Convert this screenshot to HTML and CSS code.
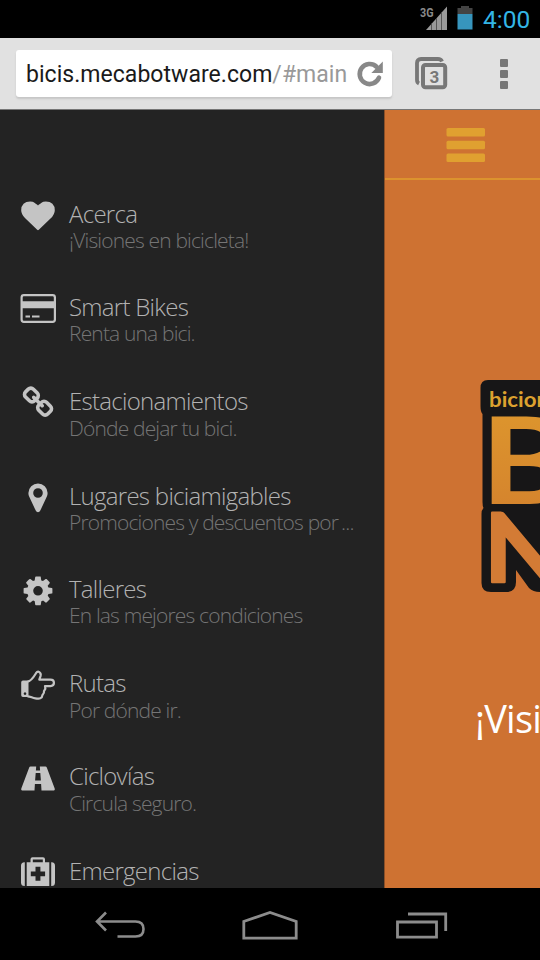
FILE: index.html
```
<!DOCTYPE html>
<html lang="es">
<head>
<meta charset="utf-8">
<title>Bicis</title>
<link rel="stylesheet" href="styles.css">
</head>
<body>
<div class="phone">
  <div class="status">
    <svg class="signal" width="30" height="26" viewBox="0 0 30 26"><text class="net" x="1" y="12" textLength="13.500" lengthAdjust="spacingAndGlyphs">3G</text><path d="M7 25L28 1.500V25Z" fill="#999"/><path d="M12.500 18.500v6.500M17.500 13v12M22.500 7.500v17.500" stroke="#555" stroke-width="1"/></svg>
    <svg class="battery" width="16" height="24" viewBox="0 0 16 24"><path d="M0.500 2H4V0h8v2h3.500v6H.5Z" fill="#444"/><path d="M.5 8h15v15.500H.5Z" fill="#3795bd"/></svg>
    <span class="clock">4:00</span>
  </div>
  <div class="toolbar">
    <div class="address">
      <span class="url">bicis.mecabotware.com<span class="path">/#main</span></span>
      <svg class="reload" width="28" height="28" viewBox="0 0 28 28"><path d="M20.500 6.700A10 10 0 1 0 23 17.700" fill="none" stroke="#888" stroke-width="4.600" stroke-linecap="round"/><path d="M26.800 1.500V13H15.300Z" fill="#888"/></svg>
    </div>
    <svg class="tabs" width="34" height="34" viewBox="0 0 34 34"><path d="M27 4.500Q26 2 23 2H6Q2 2 2 6v17q0 2.500 2 3.500" fill="none" stroke="#777" stroke-width="3.800"/><rect x="8" y="8" width="22.200" height="22.200" rx="2.500" fill="#e1e1e1" stroke="#777" stroke-width="4"/><text class="count" x="19.300" y="25.500" text-anchor="middle">3</text></svg>
    <svg class="more" width="8" height="30" viewBox="0 0 8 30" fill="#777"><rect width="8" height="8" rx="1"/><rect y="11" width="8" height="8" rx="1"/><rect y="22" width="8" height="8" rx="1"/></svg>
  </div>
  <div class="view">
    <nav class="drawer">
      <div class="item"><svg class="icon" viewBox="-64 0 1920 1792"><path d="M896 1664q-26 0-44-18l-624-602q-10-8-27.500-26T145 952.500 77 855 23.500 734 0 596q0-220 127-344t351-124q62 0 126.500 21.500t120 58T820 276t76 68q36-36 76-68t95.500-68.500 120-58T1314 128q224 0 351 124t127 344q0 221-229 450l-623 600q-18 18-44 18z"/></svg><div class="label"><span class="title">Acerca</span><span class="sub">¡Visiones en bicicleta!</span></div></div>
      <div class="item"><svg class="icon" viewBox="0 0 36 33.600"><rect x="1.600" y="3.200" width="33.300" height="26.700" rx="2.300" fill="none" stroke="#c4c4c4" stroke-width="2.200"/><path d="M1 9.200h34v7H1zM5.500 23.500h4.500v2H5.500zM12 23.500h7.500v2H12z"/></svg><div class="label"><span class="title">Smart Bikes</span><span class="sub">Renta una bici.</span></div></div>
      <div class="item"><svg class="icon" viewBox="-128 0 1920 1792"><path d="M1456 1216q0-40-28-68l-208-208q-28-28-68-28-42 0-72 32 3 3 19 18.500t21.500 21.500 15 19 13 25.500 3.500 27.500q0 40-28 68t-68 28q-15 0-27.500-3.500t-25.500-13-19-15-21.500-21.500-18.500-19q-33 31-33 73 0 40 28 68l206 207q27 27 68 27 40 0 68-26l147-146q28-28 28-67zm-703-705q0-40-28-68l-206-207q-28-28-68-28-39 0-68 27l-147 146q-28 28-28 67 0 40 28 68l208 208q27 27 68 27 42 0 72-31-3-3-19-18.500t-21.500-21.500-15-19-13-25.500-3.500-27.500q0-40 28-68t68-28q15 0 27.500 3.500t25.500 13 19 15 21.500 21.500 18.500 19q33-31 33-73zm895 705q0 120-85 203l-147 146q-83 83-203 83-121 0-204-85l-206-207q-83-83-83-203 0-123 88-209l-88-88q-86 88-208 88-120 0-204-84l-208-208q-84-84-84-204t85-203l147-146q83-83 203-83 121 0 204 85l206 207q83 83 83 203 0 123-88 209l88 88q86-88 208-88 120 0 204 84l208 208q84 84 84 204z"/></svg><div class="label"><span class="title">Estacionamientos</span><span class="sub low">Dónde dejar tu bici.</span></div></div>
      <div class="item"><svg class="icon" viewBox="-448 0 1920 1792"><path d="M768 640q0-106-75-181t-181-75-181 75-75 181 75 181 181 75 181-75 75-181zm256 0q0 109-33 179l-364 774q-16 33-47.500 52t-67.500 19-67.500-19-46.500-52l-365-774q-33-70-33-179 0-212 150-362t362-150 362 150 150 362z"/></svg><div class="label"><span class="title">Lugares biciamigables</span><span class="sub">Promociones y descuentos por<span class="dots">...</span></span></div></div>
      <div class="item"><svg class="icon" viewBox="-192 0 1920 1792"><path d="M1024 896q0-106-75-181t-181-75-181 75-75 181 75 181 181 75 181-75 75-181zm512-109v222q0 12-8 23t-20 13l-185 28q-19 54-39 91 35 50 107 138 10 12 10 25t-9 23q-27 37-99 108t-94 71q-12 0-26-9l-138-108q-44 23-91 38-16 136-29 186-7 28-36 28h-222q-14 0-24.500-8.500t-11.500-21.500l-28-184q-49-16-90-37l-141 107q-10 9-25 9-14 0-25-11-126-114-165-168-7-10-7-23 0-12 8-23 15-21 51-66.500t54-70.500q-27-50-41-99l-183-27q-13-2-21-12.500t-8-23.500v-222q0-12 8-23t19-13l186-28q14-46 39-92-40-57-107-138-10-12-10-24 0-10 9-23 26-36 98.500-107.500t94.500-71.500q13 0 26 10l138 107q44-23 91-38 16-136 29-186 7-28 36-28h222q14 0 24.500 8.500t11.500 21.500l28 184q49 16 90 37l142-107q9-9 24-9 13 0 25 10 129 119 165 170 7 8 7 22 0 12-8 23-15 21-51 66.500t-54 70.500q26 50 41 98l183 28q13 2 21 12.500t8 23.500z"/></svg><div class="label"><span class="title">Talleres</span><span class="sub">En las mejores condiciones</span></div></div>
      <div class="item"><svg class="icon" viewBox="0 0 36 33.600"><g transform="translate(0 1)"><path fill-rule="evenodd" d="M3 11.500h5.500V28H3q-1.800 0-1.800-1.800V13.300Q1.200 11.500 3 11.500ZM5 23.300a1.300 1.300 0 1 0 .01 0Z"/><path d="M7.500 12.600C11 12.300 14 7.500 16 4.200c2-3 5.400-.8 4.600 2.600L19.300 10.600H30.500c4.600 0 4.600 6.500 0 6.500H25c1.200 3-.6 4-1 5 .4 2.500-1.200 3.500-1.600 4-.2 3.600-3 3.800-7 3.200-3.500-.6-5-2-8-2" fill="none" stroke="#c4c4c4" stroke-width="2.200" stroke-linejoin="round"/></g></svg><div class="label"><span class="title">Rutas</span><span class="sub low">Por dónde ir.</span></div></div>
      <div class="item"><svg class="icon road" viewBox="0 0 36 33.600"><path fill-rule="evenodd" d="M10.500 4.600H25.500Q26.400 4.600 26.800 5.500L34.700 26.500Q35.300 28.600 33.800 28.600H2.200Q.7 28.600 1.300 26.500L9.200 5.500Q9.600 4.600 10.500 4.600ZM16.200 4.600L15.900 8.500H20.100L19.800 4.600ZM15.700 11L15.100 18.500H20.900L20.300 11ZM14.900 22L14.500 28.600H21.500L21.100 22Z"/></svg><div class="label"><span class="title">Ciclovías</span><span class="sub low">Circula seguro.</span></div></div>
      <div class="item"><svg class="icon kit" viewBox="0 0 36 33.600"><path fill-rule="evenodd" d="M4.800 7.200V31H4.500Q1 31 1 27.500V10.700Q1 7.200 4.500 7.200ZM31.200 7.200h.5q3.300 0 3.300 3.500v16.800q0 3.500-3.300 3.500h-.5ZM6.700 7.200H10.500V4.300Q10.500 2.300 12.500 2.300H23Q25 2.300 25 4.300V7.200H29.300V31H6.700ZM12.800 4.500V7.200H22.800V4.500ZM15.500 11.800V16.400H10.800V21.200H15.500V25.800H20.400V21.200H25.100V16.400H20.400V11.800Z"/></svg><div class="label"><span class="title">Emergencias</span></div></div>
    </nav>
    <main class="page">
      <header class="bar">
        <svg width="40" height="36" viewBox="0 0 40 36" fill="#e0a030"><rect x=".5" y="1" width="38.500" height="8.500" rx="1.500"/><rect x=".5" y="13.700" width="38.500" height="8.500" rx="1.500"/><rect x=".5" y="26.400" width="38.500" height="8.500" rx="1.500"/></svg>
      </header>
      <svg class="logo" width="60" height="216" viewBox="480 379 60 216">
        <defs><linearGradient id="gold" x1="0" y1="0" x2="0" y2="1"><stop offset="0" stop-color="#df9a2d"/><stop offset="1" stop-color="#d3802d"/></linearGradient></defs>
        <path d="M488 380H540V592Q533 592 529 588L516 570V582Q516 592 506 592H491Q481.500 592 481.500 583V514Q481.500 510 483.500 508Q482.500 506 482.500 502V414Q480.500 412 480.500 406V388Q480.500 380 488 380Z" fill="#171617"/>
        <text class="n" transform="translate(484 582) scale(1.080 1)">N</text>
        <text class="small" x="489" y="406.500" textLength="60" lengthAdjust="spacingAndGlyphs">bicion</text>
        <text class="b" transform="translate(480.500 504) scale(1.150 1)" fill="url(#gold)">B</text>
      </svg>
      <p class="slogan">¡Visi</p>
    </main>
  </div>
  <div class="softkeys">
    <svg width="50" height="28" viewBox="0 0 50 28"><path d="M2 10.500H40.500Q48.500 10.500 48.500 18T40.500 25.500H22.500M11 1.500L2 10.500L11 19.500" fill="none" stroke="#8c8c8c" stroke-width="2.600"/></svg>
    <svg class="home" width="56" height="30" viewBox="0 0 56 30"><path d="M1.800 28.200V11.500L28 2.500L54.200 11.500V28.200Z" fill="none" stroke="#8c8c8c" stroke-width="2.800"/></svg>
    <svg width="52" height="27" viewBox="0 0 52 27"><path d="M1.500 10H40.500V25.200H1.500ZM12 2H49.700V19" fill="none" stroke="#8c8c8c" stroke-width="2.800"/></svg>
  </div>
</div>
</body>
</html>
```
FILE: styles.css
```
* { box-sizing: border-box; }
body { margin: 0; background: #000; font-family: "Open Sans", sans-serif; }
svg { display: block; flex: none; }
.phone { width: 540px; height: 960px; display: flex; flex-direction: column; overflow: hidden; }
.status { height: 38px; flex: none; background: #000; display: flex; align-items: flex-start; justify-content: flex-end; padding: 6px 9px 0 0; font-family: Roboto, sans-serif; }
.net { font: bold 13px Roboto, sans-serif; fill: #8a8a8a; }
.signal { margin-top: -1px; }
.battery { margin-left: 8px; }
.clock { color: #33b5e5; font-size: 24.500px; line-height: 28px; margin-left: 10px; width: 48px; white-space: nowrap; }
.toolbar { height: 72px; flex: none; background: #e1e1e1; border-bottom: 1px solid #777; display: flex; align-items: flex-start; padding: 12px 32px 0 16px; }
.address { width: 376px; height: 47px; background: #fff; border-radius: 3px; box-shadow: 0 2px 2px #c6c6c6; display: flex; align-items: center; padding: 0 8px 0 10px; }
.url { font: 23px/30px Roboto, sans-serif; color: #1a1a1a; white-space: nowrap; width: 330px; letter-spacing: 0.040px; padding-top: 2px; }
.path { color: #999; }
.tabs { margin: 7px 0 0 23px; }
.count { font: bold 17px Roboto, sans-serif; fill: #777; }
.more { margin: 9px 0 0 auto; }
.view { flex: 1; min-height: 0; display: flex; overflow: hidden; }
.drawer { width: 384px; flex: none; background: #232323; padding-top: 88px; }
.item { height: 94px; display: flex; align-items: flex-start; padding-left: 20px; }
.item:first-child, .item:nth-child(4), .item:nth-child(6) { height: 93px; }
.item:nth-child(3), .item:nth-child(7) { height: 95px; }
.icon { width: 36px; height: 33.600px; margin-top: 0.600px; fill: #c4c4c4; }
.road { margin-top: 1.500px; }
.kit { margin-top: 0; }
.label { margin-left: 13px; display: flex; flex-direction: column; white-space: nowrap; font-weight: 300; }
.title { font-size: 24px; line-height: 32px; letter-spacing: -0.720px; color: #b2b2b2; }
.sub { font-size: 21px; line-height: 21px; letter-spacing: -0.840px; color: #757575; }
.low { padding-top: 1px; }
.dots { margin-left: 3px; }
.page { flex: 1; min-width: 0; overflow: hidden; background: #ce7232; border-left: 1px solid #8b5028; }
.bar { height: 70px; border-bottom: 2px solid #dc932e; padding: 17px 0 0 61px; }
.logo { margin: 199px 0 0 95px; }
.small { font: bold 21px Lato, sans-serif; fill: #dca12f; }
.b { font: bold 121px Lato, sans-serif; }
.n { font: bold 95px Lato, sans-serif; fill: #d37b35; stroke: #d37b35; stroke-width: 2.400px; stroke-linejoin: round; }
.slogan { margin: 97px 0 0 90px; font-size: 38px; line-height: 52px; color: #fff; letter-spacing: -0.800px; white-space: nowrap; }
.softkeys { height: 72px; flex: none; background: #000; display: flex; align-items: center; justify-content: space-between; padding: 2px 92px 0 95px; }
.home { margin-right: 2px; }
```
